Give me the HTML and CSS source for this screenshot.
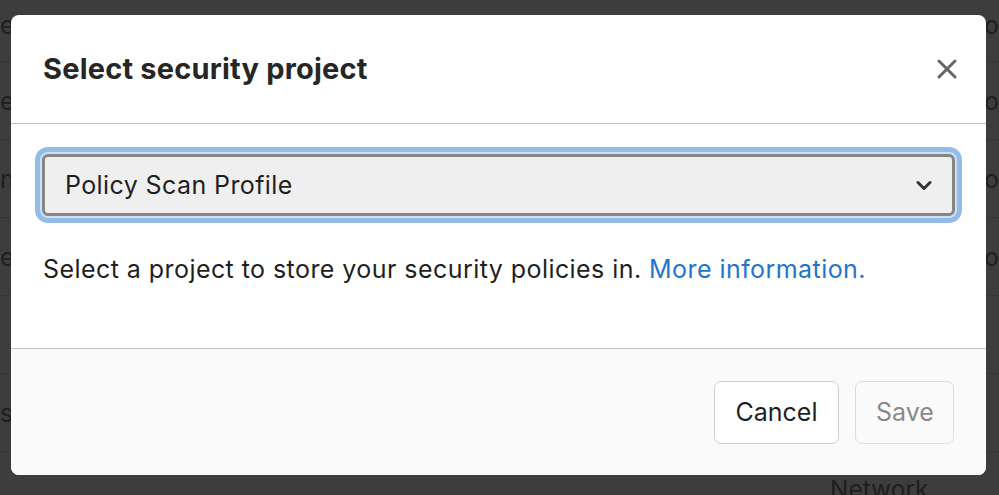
FILE: index.html
```html
<!DOCTYPE html>
<html lang="en">
<head>
<meta charset="utf-8">
<title>Select security project</title>
<link rel="stylesheet" href="styles.css">
</head>
<body>
<div class="page">
  <div class="row row-first"><span class="cell-left">ev</span><span class="cell-right">o</span></div>
  <div class="row"><span class="cell-left">e</span><span class="cell-right">o</span></div>
  <div class="row"><span class="cell-left">n</span><span class="cell-right">o</span></div>
  <div class="row"><span class="cell-left">ev</span><span class="cell-right">o</span></div>
  <div class="row"><span class="cell-left"></span><span class="cell-right"></span></div>
  <div class="row"><span class="cell-left">s</span><span class="cell-right"></span></div>
  <div class="row row-last"><span class="cell-mid">Network</span></div>
</div>

<div class="modal" role="dialog" aria-labelledby="modal-title">
  <header class="modal-header">
    <h2 class="modal-title" id="modal-title">Select security project</h2>
    <button class="close" aria-label="Close">
      <svg width="20" height="20" viewBox="0 0 20 20" aria-hidden="true">
        <path d="M2 2 L18 18 M18 2 L2 18" stroke="#666" stroke-width="3" stroke-linecap="round" fill="none"/>
      </svg>
    </button>
  </header>
  <div class="modal-body">
    <div class="select">
      <span class="select-text">Policy Scan Profile</span>
      <svg class="chevron" width="16" height="11" viewBox="0 0 16 11" aria-hidden="true">
        <path d="M2 2.5 L8 8.5 L14 2.5" stroke="#333" stroke-width="3" stroke-linecap="round" stroke-linejoin="round" fill="none"/>
      </svg>
    </div>
    <p class="help">Select a project to store your security policies in. <a href="#" class="link">More information.</a></p>
  </div>
  <footer class="modal-footer">
    <button class="btn btn-cancel">Cancel</button>
    <button class="btn btn-save" disabled>Save</button>
  </footer>
</div>
</body>
</html>
```

FILE: styles.css
```css
html, body {
  margin: 0;
  padding: 0;
}

body {
  width: 999px;
  height: 495px;
  overflow: hidden;
  background: #3d3d3d;
  font-family: Inter, "Liberation Sans", Arial, sans-serif;
  position: relative;
}

.page {
  display: flex;
  flex-direction: column;
}

.row {
  height: 78px;
  border-bottom: 1px solid #363636;
  display: flex;
  align-items: center;
  justify-content: space-between;
  color: #1e1e1e;
  font-size: 24.5px;
  box-sizing: border-box;
}

.row-first {
  height: 62px;
  align-items: flex-start;
  padding-top: 10px;
}

.row-last {
  height: 43px;
  border-bottom: 0;
  align-items: flex-start;
  justify-content: flex-start;
  padding: 22px 0 0 830px;
}

.cell-right {
  margin-right: 0;
}

.modal {
  position: absolute;
  left: 11px;
  top: 15px;
  width: 975px;
  height: 460px;
  background: #fff;
  border-radius: 8px;
  display: flex;
  flex-direction: column;
  overflow: hidden;
  color: #1f1f1f;
}

.modal-header {
  height: 109px;
  box-sizing: border-box;
  padding: 0 29px 0 32px;
  border-bottom: 1px solid #c2c2c2;
  display: flex;
  align-items: center;
  justify-content: space-between;
}

.modal-title {
  margin: 0;
  font-size: 29px;
  font-weight: 700;
  letter-spacing: 0.2px;
  color: #262626;
  line-height: 40px;
}

.close {
  border: 0;
  background: none;
  padding: 0;
  width: 20px;
  height: 20px;
  display: flex;
}

.modal-body {
  flex: 1;
  padding: 30px 31px 0 31px;
}

.select {
  height: 62px;
  box-sizing: border-box;
  border: 3px solid #868686;
  border-radius: 6px;
  background: #efefef;
  box-shadow: 0 0 0 2px #cde0f4, 0 0 0 7px #93bde8;
  display: flex;
  align-items: center;
  justify-content: space-between;
  padding: 0 20px 0 20px;
}

.select-text {
  font-size: 25px;
  letter-spacing: 0.4px;
  color: #1f1f1f;
}

.chevron {
  display: block;
}

.help {
  margin: 35px 0 0 1px;
  font-size: 25px;
  letter-spacing: 0.44px;
  line-height: 36px;
  color: #1f1f1f;
}

.link {
  color: #1f75cb;
  text-decoration: none;
}

.modal-footer {
  height: 127px;
  box-sizing: border-box;
  border-top: 1px solid #c2c2c2;
  background: #fafafa;
  display: flex;
  align-items: center;
  justify-content: flex-end;
  gap: 16px;
  padding: 0 32px;
}

.btn {
  height: 63px;
  border-radius: 7px;
  font-family: inherit;
  font-size: 25px;
  padding: 0 20px;
  box-sizing: border-box;
}

.btn-cancel {
  width: 125px;
  background: #fff;
  border: 1.5px solid #cfcfcf;
  color: #1f1f1f;
}

.btn-save {
  width: 99px;
  background: #fafafa;
  border: 1.5px solid #dddddd;
  color: #8a8a8a;
}
```
